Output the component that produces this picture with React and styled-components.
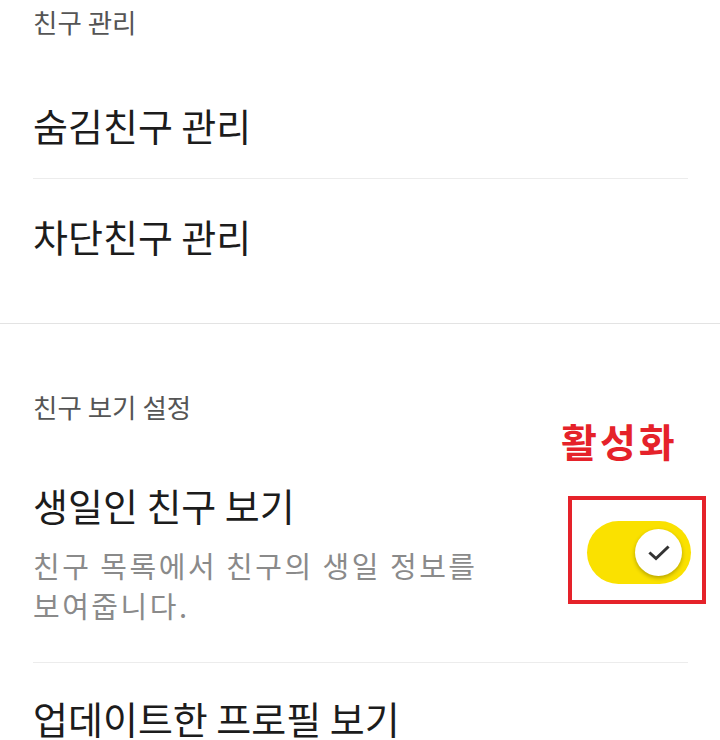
import * as React from "react";
import styled, { createGlobalStyle } from "styled-components";

const GlobalStyle = createGlobalStyle`
  html, body {
    margin: 0;
    padding: 0;
    background: #ffffff;
  }
  body {
    font-family: "Noto Sans CJK KR", "Noto Sans", sans-serif;
    -webkit-font-smoothing: antialiased;
  }
`;

const Page = styled.div`
  width: 720px;
  height: 740px;
  overflow: hidden;
  background: #fff;
`;

const Section = styled.section`
  padding: 0 32px ${(p) => p.bottom || 0}px 33px;
  border-bottom: ${(p) => (p.divided ? "1px solid #e3e3e3" : "none")};
`;

const SectionTitle = styled.h2`
  margin: 0;
  padding: ${(p) => p.top || 0}px 0 24px;
  font-size: 26.5px;
  line-height: 44px;
  font-weight: 400;
  color: #555555;
`;

const Row = styled.div`
  display: flex;
  align-items: center;
  padding: ${(p) => p.pt || 32}px 0 ${(p) => p.pb || 28}px;
  & + & {
    border-top: 1px solid #ececec;
  }
`;

const RowText = styled.div`
  flex: 1;
  min-width: 0;
`;

const RowTitle = styled.div`
  font-size: 38px;
  line-height: 50px;
  color: #1c1c1c;
`;

const RowDesc = styled.div`
  margin-top: 15px;
  font-size: 29px;
  line-height: 40px;
  letter-spacing: 2.5px;
  color: #8a8a8a;
  max-width: 480px;
  word-break: keep-all;
`;

const SwitchWrap = styled.div`
  position: relative;
  margin-right: -3px;
  margin-left: 20px;
`;

const Track = styled.button`
  display: block;
  width: 104px;
  height: 63px;
  padding: 0;
  border: none;
  border-radius: 32px;
  background: ${(p) => (p.on ? "#fae100" : "#d6d6d6")};
  position: relative;
  cursor: pointer;
`;

const Thumb = styled.span`
  position: absolute;
  top: 8px;
  left: ${(p) => (p.on ? "48px" : "8px")};
  width: 47px;
  height: 47px;
  border-radius: 50%;
  background: #ffffff;
  box-shadow: 0 2px 4px rgba(0, 0, 0, 0.28);
  display: flex;
  align-items: center;
  justify-content: center;
`;

// annotation overlay drawn on the screenshot
const Highlight = styled.div`
  position: absolute;
  left: -19px;
  right: -15px;
  top: -25px;
  bottom: -20px;
  border: 4px solid #e5222a;
  pointer-events: none;
`;

const Label = styled.div`
  position: absolute;
  left: -26px;
  top: -102px;
  font-size: 39px;
  line-height: 42px;
  font-weight: 700;
  letter-spacing: 3px;
  color: #e5222a;
  white-space: nowrap;
`;

const Check = () => (
  <svg width="22" height="16" viewBox="0 0 22 16" fill="none">
    <path
      d="M2.5 8.5 L8 13.5 L19.5 2.5"
      stroke="#333"
      strokeWidth="3"
      strokeLinecap="square"
      strokeLinejoin="miter"
    />
  </svg>
);

const Toggle = ({ on }) => (
  <SwitchWrap>
    <Label>활성화</Label>
    <Track on={on ? 1 : 0} aria-pressed={on}>
      <Thumb on={on ? 1 : 0}>{on && <Check />}</Thumb>
    </Track>
    <Highlight />
  </SwitchWrap>
);

export default function App() {
  const [birthday, setBirthday] = React.useState(true);

  return (
    <Page>
      <GlobalStyle />
      <Section divided bottom={34}>
        <SectionTitle>친구 관리</SectionTitle>
        <Row>
          <RowTitle>숨김친구 관리</RowTitle>
        </Row>
        <Row>
          <RowTitle>차단친구 관리</RowTitle>
        </Row>
      </Section>
      <Section>
        <SectionTitle top={61}>친구 보기 설정</SectionTitle>
        <Row pt={27} pb={37} onClick={() => setBirthday(!birthday)}>
          <RowText>
            <RowTitle>생일인 친구 보기</RowTitle>
            <RowDesc>친구 목록에서 친구의 생일 정보를 보여줍니다.</RowDesc>
          </RowText>
          <Toggle on={birthday} />
        </Row>
        <Row pt={30}>
          <RowTitle>업데이트한 프로필 보기</RowTitle>
        </Row>
      </Section>
    </Page>
  );
}
